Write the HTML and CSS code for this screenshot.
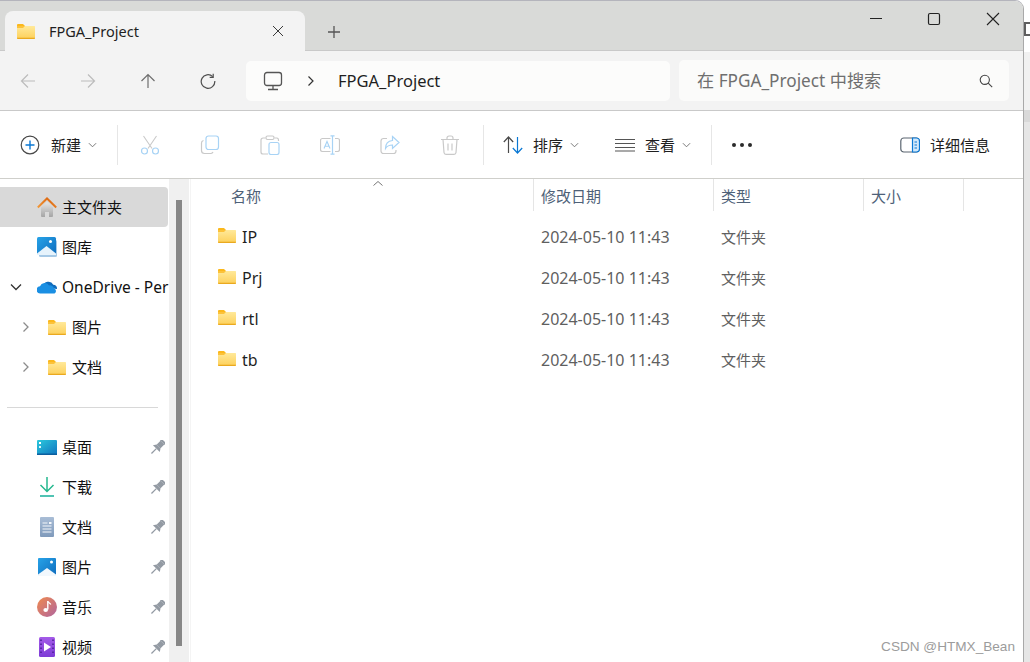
FILE: index.html
```html
<!DOCTYPE html>
<html lang="zh-CN">
<head>
  <meta charset="UTF-8">
  <title>FPGA_Project</title>
  <link rel="stylesheet" href="styles.css">
</head>
<body>

<svg class="defs" aria-hidden="true">
  <defs>
    <linearGradient id="g-folder" x1="0" y1="0" x2="0" y2="1"><stop offset="0" stop-color="#ffe99a"/><stop offset="1" stop-color="#fdd05a"/></linearGradient>
    <linearGradient id="g-house" x1="0" y1="0" x2="0" y2="1"><stop offset="0" stop-color="#e6e6e6"/><stop offset="1" stop-color="#a4a4a4"/></linearGradient>
    <linearGradient id="g-roof" x1="0" y1="1" x2="1" y2="0"><stop offset="0" stop-color="#f29a3c"/><stop offset="1" stop-color="#d95f0a"/></linearGradient>
    <linearGradient id="g-photo" x1="0" y1="0" x2="1" y2="1"><stop offset="0" stop-color="#27a3e8"/><stop offset="1" stop-color="#0f6cbd"/></linearGradient>
    <linearGradient id="g-desk" x1="0" y1="0" x2="1" y2="1"><stop offset="0" stop-color="#2cc9dc"/><stop offset="1" stop-color="#0f74c0"/></linearGradient>
    <linearGradient id="g-doc" x1="0" y1="0" x2="0" y2="1"><stop offset="0" stop-color="#a9bdd6"/><stop offset="1" stop-color="#7f9abb"/></linearGradient>
    <linearGradient id="g-music" x1="0" y1="0" x2="1" y2="1"><stop offset="0" stop-color="#f08a4e"/><stop offset="1" stop-color="#b0659f"/></linearGradient>
    <linearGradient id="g-video" x1="0" y1="0" x2="0" y2="1"><stop offset="0" stop-color="#a45be8"/><stop offset="1" stop-color="#7d3bd6"/></linearGradient>
    <symbol id="folder" viewBox="0 0 18 15">
      <path d="M0 1a1 1 0 0 1 1-1h5l2 2H0z" fill="#fbb81c"/>
      <path d="M0 2h17.500a.5.5 0 0 1 .5.5V14a1 1 0 0 1-1 1H1a1 1 0 0 1-1-1z" fill="url(#g-folder)"/>
      <path d="M0 13.800h18V14a1 1 0 0 1-1 1H1a1 1 0 0 1-1-1z" fill="#eaa91f"/>
      <path d="M0 2h8L6 4H0z" fill="#fcc23a"/>
    </symbol>
    <symbol id="pin" viewBox="0 0 14 14">
      <g transform="rotate(45 7 7)" fill="#939aa3">
        <rect x="3.500" y="-1.500" width="7" height="2" rx=".6"/>
        <rect x="4.500" y=".5" width="5" height="5"/>
        <path d="M4.500 5.500h5l2 3h-9z"/>
        <rect x="6.400" y="8.500" width="1.200" height="6.500"/>
      </g>
    </symbol>
    <symbol id="chev-down" viewBox="0 0 10 6">
      <path d="M1 1l4 4 4-4" fill="none" stroke="currentColor" stroke-width="1"/>
    </symbol>
  </defs>
</svg>

<div class="screen">
  <div class="window">

    <div class="tabbar">
      <div class="tab">
        <svg class="ic-folder"><use href="#folder"/></svg>
        <span class="tab-title">FPGA_Project</span>
        <svg class="tab-close" viewBox="0 0 12 12"><path d="M1 1l10 10M11 1L1 11" stroke="#3a3a3a" fill="none"/></svg>
      </div>
      <svg class="tab-add" viewBox="0 0 14 14"><path d="M7 1v12M1 7h12" stroke="#555" stroke-width="1.300" fill="none"/></svg>
      <div class="win-controls">
        <div class="win-btn"><svg width="14" height="14" viewBox="0 0 14 14"><path d="M1 6.500h12" stroke="#222" fill="none"/></svg></div>
        <div class="win-btn"><svg width="14" height="14" viewBox="0 0 14 14"><rect x="1.500" y="1.500" width="11" height="11" rx="1.500" stroke="#222" fill="none" stroke-width="1.200"/></svg></div>
        <div class="win-btn last"><svg width="14" height="14" viewBox="0 0 14 14"><path d="M1 1l12 12M13 1L1 13" stroke="#222" fill="none" stroke-width="1.100"/></svg></div>
      </div>
    </div>

    <div class="navbar">
      <div class="nav-btns">
        <svg class="nav-ic" viewBox="0 0 16 16"><path d="M15 8H1.500M8 1.500L1.500 8 8 14.500" fill="none" stroke="#bcbcbc" stroke-width="1.200"/></svg>
        <svg class="nav-ic" viewBox="0 0 16 16"><path d="M1 8h13.500M8 1.500L14.500 8 8 14.500" fill="none" stroke="#bcbcbc" stroke-width="1.200"/></svg>
        <svg class="nav-ic" viewBox="0 0 16 16"><path d="M8 15V1.500M1.500 8L8 1.500 14.500 8" fill="none" stroke="#6e6e6e" stroke-width="1.200"/></svg>
        <svg class="nav-ic" viewBox="0 0 16 16"><path d="M12.700 3.600A6.800 6.800 0 1 0 14.800 8" fill="none" stroke="#4f4f4f" stroke-width="1.200"/><path d="M13.200.8v3.500H9.700" fill="none" stroke="#4f4f4f" stroke-width="1.200"/></svg>
      </div>
      <div class="address">
        <svg class="pc-ic" viewBox="0 0 20 20"><rect x="1.500" y="1.500" width="17" height="13" rx="2.500" fill="none" stroke="#555" stroke-width="1.300"/><path d="M10 15v3M5 18.500h10" stroke="#555" stroke-width="1.300" fill="none"/></svg>
        <svg class="crumb-sep" viewBox="0 0 8 12"><path d="M1.500 1.500L6 6l-4.500 4.500" fill="none" stroke="#333" stroke-width="1.200"/></svg>
        <span class="crumb">FPGA_Project</span>
      </div>
      <div class="search">
        <span class="search-hint">在 FPGA_Project 中搜索</span>
        <svg class="search-ic" viewBox="0 0 14 14"><circle cx="5.800" cy="5.800" r="4.600" fill="none" stroke="#444" stroke-width="1.100"/><path d="M9.200 9.200l4 4" stroke="#444" stroke-width="1.100"/></svg>
      </div>
    </div>

    <div class="cmdbar">
      <div class="cmd-new">
        <svg class="cmd-ic" viewBox="0 0 20 20"><circle cx="10" cy="10" r="8.800" fill="none" stroke="#4a4a4a" stroke-width="1.200"/><path d="M10 5.500v9M5.500 10h9" stroke="#0a78d4" stroke-width="1.400" fill="none"/></svg>
        <span class="cmd-label">新建</span>
        <svg class="chev"><use href="#chev-down"/></svg>
      </div>
      <div class="cmd-sep"></div>
      <div class="cmd-group">
        <div class="cmd-slot"><svg class="cmd-ic" viewBox="0 0 20 20"><path d="M3.500 1l8.500 12.500M16.500 1L8 13.500" stroke="#c9c9c9" stroke-width="1.100" fill="none"/><circle cx="4.500" cy="16" r="3" fill="none" stroke="#a8d3f5" stroke-width="1.200"/><circle cx="15.500" cy="16" r="3" fill="none" stroke="#a8d3f5" stroke-width="1.200"/></svg></div>
        <div class="cmd-slot"><svg class="cmd-ic" viewBox="0 0 20 20"><path d="M3.500 5.500A2.500 2.500 0 0 0 1.500 8v7.500a3 3 0 0 0 3 3H11a2.500 2.500 0 0 0 2-1.500" fill="none" stroke="#c9c9c9" stroke-width="1.200"/><rect x="6" y="1" width="12.500" height="13.500" rx="2.500" fill="none" stroke="#a8d3f5" stroke-width="1.200"/></svg></div>
        <div class="cmd-slot"><svg class="cmd-ic" viewBox="0 0 20 20"><path d="M5.500 3H3a2 2 0 0 0-2 2v12a2 2 0 0 0 2 2h5M14.500 3H17a2 2 0 0 1 1.500 1.800V6" fill="none" stroke="#c9c9c9" stroke-width="1.200"/><rect x="6" y="1" width="8" height="3.500" rx="1.500" fill="none" stroke="#c9c9c9" stroke-width="1.200"/><rect x="9" y="7.500" width="10" height="12" rx="2" fill="none" stroke="#a8d3f5" stroke-width="1.200"/></svg></div>
        <div class="cmd-slot"><svg class="cmd-ic" viewBox="0 0 20 20"><path d="M10.500 3.500H2.500a2 2 0 0 0-2 2v9a2 2 0 0 0 2 2h8M15 3.500h2.500a2 2 0 0 1 2 2v9a2 2 0 0 1-2 2H15" fill="none" stroke="#c9c9c9" stroke-width="1.200"/><path d="M4 13.500L7 6.500l3 7M5 11.200h4" fill="none" stroke="#a8d3f5" stroke-width="1.100"/><path d="M12.500.8v18.400M10.500.8h4M10.500 19.200h4" fill="none" stroke="#a8d3f5" stroke-width="1.200"/></svg></div>
        <div class="cmd-slot"><svg class="cmd-ic" viewBox="0 0 20 20"><path d="M7 3.500H3.500a2.500 2.500 0 0 0-2.500 2.500v10a2.500 2.500 0 0 0 2.500 2.500h10a2.500 2.500 0 0 0 2.500-2.500v-1" fill="none" stroke="#c9c9c9" stroke-width="1.200"/><path d="M12.500 1.500L19 7.500l-6.500 6V10c-3 0-5.500 1-7 3.500 0-4.500 2.500-7.500 7-8z" fill="none" stroke="#a8d3f5" stroke-width="1.200"/></svg></div>
        <div class="cmd-slot"><svg class="cmd-ic" viewBox="0 0 20 20"><path d="M1 4.500h18M7 4.500V3a2 2 0 0 1 2-2h2a2 2 0 0 1 2 2v1.500M3 4.500l1 13a2 2 0 0 0 2 1.800h8a2 2 0 0 0 2-1.800l1-13M8 8.500v7M12 8.500v7" fill="none" stroke="#c9c9c9" stroke-width="1.200"/></svg></div>
      </div>
      <div class="cmd-sep after-icons"></div>
      <div class="cmd-btn sort">
        <svg class="cmd-ic" viewBox="0 0 20 20"><path d="M5.500 18V2M.8 7l4.700-5 4.700 5" fill="none" stroke="#4a4a4a" stroke-width="1.200"/><path d="M14.500 2v16M9.800 13l4.700 5 4.700-5" fill="none" stroke="#0a78d4" stroke-width="1.200"/></svg>
        <span class="cmd-label">排序</span>
        <svg class="chev"><use href="#chev-down"/></svg>
      </div>
      <div class="cmd-btn view">
        <svg class="cmd-ic" viewBox="0 0 20 20"><path d="M0 4.500h20M0 8.500h20M0 12.500h20M0 16h20" fill="none" stroke="#555" stroke-width="1.100"/></svg>
        <span class="cmd-label">查看</span>
        <svg class="chev"><use href="#chev-down"/></svg>
      </div>
      <div class="cmd-sep after-view"></div>
      <div class="cmd-more"><i></i><i></i><i></i></div>
      <div class="cmd-btn details">
        <svg class="cmd-ic" viewBox="0 0 20 20"><rect x=".8" y="3" width="18.400" height="14" rx="3" fill="none" stroke="#5a6570" stroke-width="1.200"/><path d="M12.500 3h4a3 3 0 0 1 3 3v8a3 3 0 0 1-3 3h-4z" fill="#d2e8fa" stroke="#0a78d4" stroke-width="1.200"/><path d="M14.500 7h2.500M14.500 10h2.500M14.500 13h2.500" stroke="#0a78d4"/></svg>
        <span class="cmd-label">详细信息</span>
      </div>
    </div>

    <div class="main">
      <nav class="sidebar">
        <div class="side-item selected">
          <span class="side-chev"></span>
          <svg class="side-ic" viewBox="0 0 20 20"><path d="M4 10.500L10 5l6 5.500V19a1 1 0 0 1-1 1h-3v-5H8v5H5a1 1 0 0 1-1-1z" fill="url(#g-house)"/><path d="M.8 10.500L10 1.500l9.200 9" fill="none" stroke="url(#g-roof)" stroke-width="2"/></svg>
          <span class="side-text">主文件夹</span>
        </div>
        <div class="side-item">
          <span class="side-chev"></span>
          <svg class="side-ic" viewBox="0 0 20 20"><rect x="2" y="3" width="18" height="17" rx="1.500" fill="#a6c9e6"/><rect width="19" height="18" rx="1.500" fill="url(#g-photo)"/><path d="M0 16.500L9.500 9l9.500 7.500V18H0z" fill="#e6f3fc"/><circle cx="13.500" cy="4.500" r="1.500" fill="#fff"/></svg>
          <span class="side-text">图库</span>
        </div>
        <div class="side-item">
          <span class="side-chev"><svg viewBox="0 0 12 8"><path d="M1 1.500l5 5 5-5" fill="none" stroke="#333" stroke-width="1.300"/></svg></span>
          <svg class="side-ic" viewBox="0 0 20 14"><path d="M6 6.500A5.500 5.500 0 0 1 16.300 4.700 4 4 0 0 1 20 9l-8-1z" fill="#0f6cbd"/><path d="M3.500 13.500A3.500 3.500 0 0 1 3 6.300 5 5 0 0 1 12 5.500 4 4 0 0 1 17 8.500 2.700 2.700 0 0 1 17.500 13.500z" fill="#1a8fe3"/></svg>
          <span class="side-text latin">OneDrive - Per</span>
        </div>
        <div class="side-item sub">
          <span class="side-chev"><svg viewBox="0 0 8 12"><path d="M1.500 1.500L6 6l-4.500 4.500" fill="none" stroke="#8c8c8c" stroke-width="1.300"/></svg></span>
          <svg class="ic-folder"><use href="#folder"/></svg>
          <span class="side-text">图片</span>
        </div>
        <div class="side-item sub">
          <span class="side-chev"><svg viewBox="0 0 8 12"><path d="M1.500 1.500L6 6l-4.500 4.500" fill="none" stroke="#8c8c8c" stroke-width="1.300"/></svg></span>
          <svg class="ic-folder"><use href="#folder"/></svg>
          <span class="side-text">文档</span>
        </div>
        <div class="side-divider"></div>
        <div class="side-item">
          <span class="side-chev"></span>
          <svg class="side-ic" viewBox="0 0 20 16"><rect y="1" width="20" height="15" rx="1" fill="url(#g-desk)"/><rect x="2" y="3" width="2" height="2" fill="#fff"/><rect x="2" y="7" width="2" height="2" fill="#d9f3fa"/><rect y="14.500" width="20" height="1.500" fill="#0d5f9e"/></svg>
          <span class="side-text">桌面</span>
          <svg class="side-pin"><use href="#pin"/></svg>
        </div>
        <div class="side-item">
          <span class="side-chev"></span>
          <svg class="side-ic" viewBox="0 0 20 20"><path d="M10 0v14M3.500 8l6.500 6.500L16.500 8" fill="none" stroke="#25b88e" stroke-width="1.500"/><path d="M3 19h14" stroke="#25b5a0" stroke-width="1.600"/></svg>
          <span class="side-text">下载</span>
          <svg class="side-pin"><use href="#pin"/></svg>
        </div>
        <div class="side-item">
          <span class="side-chev"></span>
          <svg class="side-ic" viewBox="0 0 20 20"><rect x="3" width="14" height="20" rx="1" fill="url(#g-doc)"/><path d="M5.500 6h5M5.500 9h9M5.500 12h9M5.500 15h9" stroke="#f4f7fb"/><rect x="12" y="5" width="2.500" height="2" fill="#f4f7fb"/></svg>
          <span class="side-text">文档</span>
          <svg class="side-pin"><use href="#pin"/></svg>
        </div>
        <div class="side-item">
          <span class="side-chev"></span>
          <svg class="side-ic" viewBox="0 0 20 20"><rect x="1" y="1" width="18" height="18" rx="1" fill="url(#g-photo)"/><path d="M1 17.500L10 11l9 6.500V19H1z" fill="#f2f8fd"/><circle cx="14.500" cy="5" r="1.500" fill="#fff"/></svg>
          <span class="side-text">图片</span>
          <svg class="side-pin"><use href="#pin"/></svg>
        </div>
        <div class="side-item">
          <span class="side-chev"></span>
          <svg class="side-ic" viewBox="0 0 20 20"><circle cx="10" cy="10" r="10" fill="url(#g-music)"/><path d="M10.800 4v8.500" stroke="#fff" stroke-width="1.400"/><path d="M10.800 4.500c1 1.500 2.500 1.500 3 3" stroke="#fff" stroke-width="1.200" fill="none"/><ellipse cx="8.700" cy="13" rx="2.300" ry="1.900" fill="#fff"/></svg>
          <span class="side-text">音乐</span>
          <svg class="side-pin"><use href="#pin"/></svg>
        </div>
        <div class="side-item">
          <span class="side-chev"></span>
          <svg class="side-ic" viewBox="0 0 20 20"><rect x="2" width="16" height="20" rx="1.500" fill="url(#g-video)"/><path d="M4 2.500v1.500M4 6.500v1.500M4 10.500v1.500M4 14.500v1.500M16 2.500v1.500M16 6.500v1.500M16 10.500v1.500M16 14.500v1.500" stroke="#4a1f96" stroke-width="1.500"/><path d="M7 5.500l7 4.500-7 4.500z" fill="#fff"/></svg>
          <span class="side-text">视频</span>
          <svg class="side-pin"><use href="#pin"/></svg>
        </div>
      </nav>

      <div class="scroller"><div class="thumb"></div></div>

      <section class="files">
        <div class="col-grid head">
          <div class="head-cell name">名称<span class="sort-caret"><svg viewBox="0 0 10 5"><path d="M.5 4.500L5 .5l4.500 4" fill="none" stroke="#777"/></svg></span></div>
          <div class="head-cell">修改日期</div>
          <div class="head-cell">类型</div>
          <div class="head-cell">大小</div>
        </div>
        <div id="rows"></div>
      </section>
    </div>

    <div class="watermark">CSDN @HTMX_Bean</div>
  </div>

  <div class="behind">
    <div class="behind-top"><span class="behind-box"></span></div>
    <div class="behind-a"></div>
    <div class="behind-b"></div>
    <div class="behind-c"></div>
  </div>
</div>

<script>
  // file rows
  const files = ['IP', 'Prj', 'rtl', 'tb'];
  const rows = document.getElementById('rows');
  files.forEach(name => {
    const row = document.createElement('div');
    row.className = 'col-grid row';
    row.innerHTML = `<div class="file-name"><svg class="ic-folder"><use href="#folder"/></svg><span>${name}</span></div>
      <div class="file-date">2024-05-10 11:43</div>
      <div class="file-type">文件夹</div>
      <div></div>`;
    rows.appendChild(row);
  });
</script>

</body>
</html>
```

FILE: styles.css
```css
html, body {
  margin: 0;
  padding: 0;
  height: 662px;
  overflow: hidden;
}

body {
  font-family: "Noto Sans", "Noto Sans CJK SC", sans-serif;
  font-size: 15px;
  color: #1b1b1b;
  background: #fff;
}

.defs {
  position: absolute;
  width: 0;
  height: 0;
}

.screen {
  display: flex;
  height: 662px;
}

.window {
  position: relative;
  width: 1023px;
  height: 661px;
  display: flex;
  flex-direction: column;
  background: #fff;
  border-top: 1px solid #b4b4bc;
  border-right: 1px solid #a9a9a9;
  border-top-right-radius: 9px;
  overflow: hidden;
  flex-shrink: 0;
}

/* tab strip */
.tabbar {
  height: 49px;
  display: flex;
  align-items: flex-start;
  background: #d9dad8;
  border-bottom: 1px solid #c9c9c9;
}

.tab {
  width: 300px;
  height: 40px;
  margin: 10px 0 -1px 5px;
  display: flex;
  align-items: center;
  padding-left: 12px;
  box-sizing: border-box;
  background: #f3f3f3;
  border-radius: 8px 8px 0 0;
}

.ic-folder {
  width: 18px;
  height: 15px;
  flex-shrink: 0;
}

.tab-title {
  margin-left: 14px;
  font-size: 14.5px;
  color: #1f1f1f;
}

.tab-close {
  width: 12px;
  height: 12px;
  margin-left: auto;
  margin-right: 21px;
}

.tab-add {
  width: 14px;
  height: 14px;
  margin: 24px 0 0 22px;
}

.win-controls {
  display: flex;
  margin-left: auto;
}

.win-btn {
  width: 58px;
  height: 36px;
  display: flex;
  align-items: center;
  justify-content: center;
}

.win-btn.last {
  width: 60px;
}

/* address row */
.navbar {
  height: 59px;
  display: flex;
  align-items: center;
  padding: 0 14px 0 8px;
  background: #f3f3f3;
  border-bottom: 1px solid #c9c9c9;
}

.nav-btns {
  display: flex;
  gap: 20px;
  margin-right: 18px;
}

.nav-ic {
  width: 16px;
  height: 16px;
  padding: 0 12px;
}

.address {
  flex: 1;
  height: 40px;
  display: flex;
  align-items: center;
  padding-left: 17px;
  background: #fcfcfb;
  border-radius: 5px;
  margin-right: 9px;
}

.pc-ic {
  width: 20px;
  height: 20px;
}

.crumb-sep {
  width: 8px;
  height: 12px;
  margin-left: 24px;
}

.crumb {
  margin-left: 23px;
  font-size: 16.5px;
  color: #1f1f1f;
}

.search {
  width: 330px;
  height: 41px;
  display: flex;
  align-items: center;
  box-sizing: border-box;
  padding: 0 16px 0 18px;
  background: #fbfbfa;
  border-radius: 5px;
}

.search-hint {
  font-size: 17.2px;
  color: #6f6f6f;
  margin-bottom: 2px;
}

.search-ic {
  width: 14px;
  height: 14px;
  margin-left: auto;
}

/* command bar */
.cmdbar {
  height: 67px;
  display: flex;
  align-items: center;
  background: #fff;
  border-bottom: 1px solid #cfcfcb;
  flex-shrink: 0;
}

.cmd-ic {
  width: 20px;
  height: 20px;
  flex-shrink: 0;
}

.cmd-new {
  width: 97px;
  margin-left: 20px;
  display: flex;
  align-items: center;
}

.cmd-label {
  line-height: 20px;
  color: #1f1f1f;
  white-space: nowrap;
  width: 30px;
  font-size: 15px;
}

.cmd-new .cmd-label {
  margin-left: 11px;
}

.chev {
  width: 9px;
  height: 6px;
  margin-left: 7px;
  color: #6b6b6b;
}

.cmd-sep {
  width: 1px;
  height: 40px;
  background: #e6e6e6;
  flex-shrink: 0;
}

.cmd-group {
  display: flex;
  margin-left: 2px;
}

.cmd-slot {
  width: 60px;
  display: flex;
  justify-content: center;
}

.cmd-sep.after-icons {
  margin-left: 3px;
}

.cmd-btn {
  display: flex;
  align-items: center;
  gap: 10px;
}

.cmd-btn .chev {
  margin-left: -3px;
}

.sort {
  margin-left: 19px;
}

.view {
  margin-left: 36px;
}

.cmd-sep.after-view {
  margin-left: 20px;
}

.cmd-more {
  display: flex;
  gap: 4px;
  margin-left: 20px;
}

.cmd-more i {
  width: 4px;
  height: 4px;
  border-radius: 50%;
  background: #2b2b2b;
}

.details {
  margin-left: auto;
  margin-right: 33px;
}

.details .cmd-label {
  width: 60px;
}

/* body */
.main {
  flex: 1;
  display: flex;
  min-height: 0;
}

.sidebar {
  width: 169px;
  flex-shrink: 0;
  padding-top: 8px;
  overflow: hidden;
}

.side-item {
  height: 40px;
  display: flex;
  align-items: center;
  white-space: nowrap;
  overflow: hidden;
}

.side-item.selected {
  width: 168px;
  background: #d9d9d9;
  border-radius: 0 4px 4px 0;
}

.side-chev {
  width: 37px;
  display: flex;
  justify-content: center;
  flex-shrink: 0;
  box-sizing: border-box;
  padding-right: 6px;
}

.side-chev svg {
  width: 12px;
  height: 8px;
}

.side-item.sub .side-chev svg {
  width: 8px;
  height: 12px;
  margin-left: 21px;
}

.side-item.sub .ic-folder {
  margin-left: 11px;
}

.side-item.sub .side-text {
  margin-left: 6px;
}

.side-ic {
  width: 20px;
  height: 20px;
  flex-shrink: 0;
}

.side-text {
  margin-left: 5px;
  margin-bottom: 2px;
  color: #111;
  font-size: 15px;
}

.side-text.latin {
  margin-bottom: 0;
  font-size: 15.5px;
}

.side-pin {
  width: 15px;
  height: 15px;
  margin-left: auto;
  margin-right: 4px;
  flex-shrink: 0;
}

.side-divider {
  height: 1px;
  width: 151px;
  margin: 20px 0 19px 7px;
  background: #d8d8d8;
}

.scroller {
  width: 20px;
  flex-shrink: 0;
  box-sizing: border-box;
  padding: 21px 0 0 7px;
  background: #f0f0f0;
}

.thumb {
  width: 6px;
  height: 446px;
  background: #878787;
}

.files {
  flex: 1;
  margin-left: 1px;
  border-left: 1px solid #f4f4f4;
}

.col-grid {
  display: grid;
  grid-template-columns: 342px 180px 150px 101px;
}

.head {
  height: 32px;
}

.head-cell {
  position: relative;
  display: flex;
  align-items: center;
  padding-left: 7px;
  font-size: 15px;
  color: #4e6178;
  border-left: 1px solid #e5e5e5;
}

.head-cell:last-child {
  border-right: 1px solid #e5e5e5;
}

.head-cell.name {
  padding-left: 40px;
  border-left: 0;
}

.sort-caret {
  position: absolute;
  left: 182px;
  top: 1px;
  line-height: 0;
}

.sort-caret svg {
  width: 10px;
  height: 5px;
}

#rows {
  margin-top: 5px;
}

.row {
  height: 41px;
  align-items: center;
}

.file-name {
  display: flex;
  align-items: center;
  gap: 6px;
  padding-left: 27px;
  font-size: 16px;
  color: #1f1f1f;
}

.file-name .ic-folder {
  margin-bottom: 2px;
}

.file-date {
  padding-left: 8px;
  font-size: 16px;
  color: #5f5f5f;
}

.file-type {
  padding-left: 8px;
  color: #5f5f5f;
  font-size: 15px;
}

.watermark {
  position: absolute;
  right: 8px;
  bottom: 8px;
  font-family: "Liberation Sans", sans-serif;
  font-size: 13.6px;
  color: #9c9c9c;
}

/* bit of the window behind */
.behind {
  flex: 1;
  display: flex;
  flex-direction: column;
}

.behind-top {
  height: 52px;
  padding-top: 22px;
  box-sizing: border-box;
}

.behind-box {
  display: block;
  width: 6px;
  height: 10px;
  border: 2px solid #5f5f5f;
  border-right: 0;
}

.behind-a {
  height: 58px;
  background: #f1f1f1;
}

.behind-b {
  height: 12px;
  background: #d9d9d9;
}

.behind-c {
  flex: 1;
  background: #e6e6e6;
}
```
